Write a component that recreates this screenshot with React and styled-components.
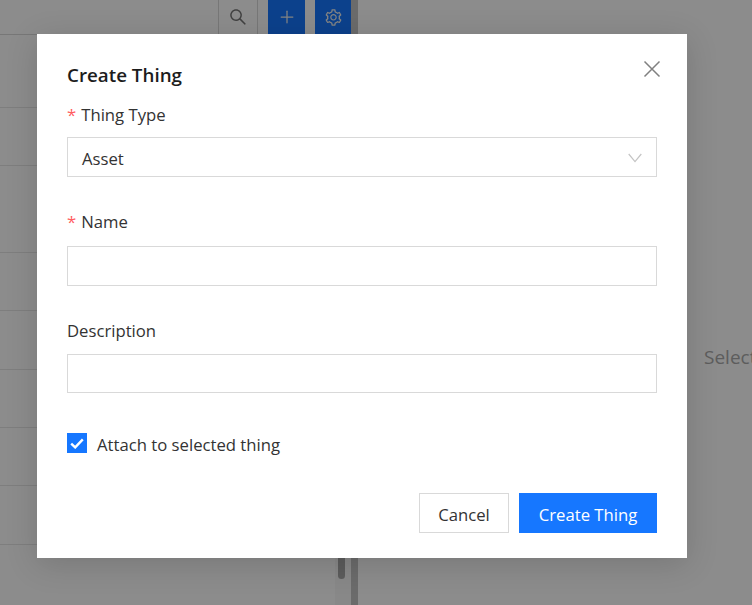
import React from "react";
import styled, { createGlobalStyle } from "styled-components";
import { Plus } from "lucide-react";
import { AiOutlineSearch, AiOutlineSetting } from "react-icons/ai";

const Global = createGlobalStyle`
  html, body { margin: 0; padding: 0; height: 100%; }
  body { font-family: "Open Sans", "Noto Sans", "Liberation Sans", sans-serif; background: #fff; overflow: hidden; }
  * { box-sizing: border-box; }
`;

const Page = styled.div`
  position: relative;
  width: 752px;
  height: 605px;
  display: flex;
  overflow: hidden;
  background: #fff;
`;

const LeftPane = styled.div`
  width: 351px;
  height: 100%;
  display: flex;
  flex-direction: column;
`;

const Toolbar = styled.div`
  height: 34px;
  display: flex;
  justify-content: flex-end;
  align-items: stretch;
  gap: 10px;
  flex: none;
`;

const IconCell = styled.div`
  width: 40px;
  display: flex;
  align-items: center;
  justify-content: center;
  color: #777;
  border-left: 1px solid #d9d9d9;
  border-right: 1px solid #d9d9d9;
`;

const ToolButton = styled.div`
  width: ${p => p.$w}px;
  display: flex;
  align-items: center;
  justify-content: center;
  background: #1677ff;
  color: #f0f0f0;
`;

const Body = styled.div`
  flex: 1;
  display: flex;
  border-top: 1px solid #d9d9d9;
  min-height: 0;
`;

const Tree = styled.div`
  flex: 1;
  display: flex;
  flex-direction: column;
`;

const TreeRow = styled.div`
  height: ${p => p.$h}px;
  flex: none;
  border-bottom: 1px solid #e6e6e6;
`;

const ScrollTrack = styled.div`
  position: relative;
  width: 16px;
  flex: none;
  background: #f7f7f7;
`;

const ScrollThumb = styled.div`
  position: absolute;
  left: 3px;
  bottom: 26px;
  width: 7px;
  height: 200px;
  border-radius: 0 0 4px 4px;
  background: #a8a8a8;
`;

const Splitter = styled.div`
  width: 7px;
  background: #c4c4c4;
  flex: none;
`;

const RightPane = styled.div`
  flex: 1;
  display: flex;
  align-items: center;
  color: #aaa;
  font-size: 19px;
  white-space: nowrap;
  padding: 108px 0 0 346px;
  overflow: hidden;
`;

const Overlay = styled.div`
  position: absolute;
  inset: 0;
  background: rgba(0, 0, 0, 0.45);
`;

const Dialog = styled.div`
  position: absolute;
  left: 37px;
  top: 34px;
  width: 650px;
  height: 524px;
  background: #fff;
  padding: 28px 30px 25px;
  display: flex;
  flex-direction: column;
  box-shadow: 0 6px 30px rgba(0, 0, 0, 0.15);
  color: #333;
`;

const Title = styled.h2`
  margin: 0;
  font-size: 18.8px;
  line-height: 26px;
  font-weight: 600;
  color: #1c1c1c;
`;

const Close = styled.svg`
  position: absolute;
  top: 26px;
  right: 26px;
  width: 18px;
  height: 18px;
  stroke: #808080;
  stroke-width: 1.5;
  fill: none;
`;

const Field = styled.div`
  display: flex;
  flex-direction: column;
  margin-top: ${p => p.$mt}px;
`;

const Label = styled.div`
  font-size: 16.7px;
  line-height: 24px;
  margin-bottom: ${p => p.$mb}px;
  color: #333;
`;

const Star = styled.span`
  color: #ff5c5f;
  margin-right: 5px;
`;

const Input = styled.div`
  height: ${p => p.$h || 40}px;
  border: 1px solid #d9d9d9;
  padding: 2px 14px 0;
  display: flex;
  align-items: center;
  justify-content: space-between;
  font-size: 16.7px;
  color: #333;
`;

const Chevron = styled.svg`
  width: 14px;
  height: 10px;
  stroke: #c4c4c4;
  stroke-width: 1.2;
  fill: none;
`;

const CheckRow = styled.div`
  display: flex;
  align-items: center;
  gap: 10px;
  margin-top: 40px;
  font-size: 16.7px;
  line-height: 24px;
`;

const Box = styled.span`
  width: 20px;
  height: 20px;
  margin-bottom: 4px;
  background: #1677ff;
  display: flex;
  align-items: center;
  justify-content: center;
`;

const CheckMark = styled.svg`
  width: 14px;
  height: 11px;
  stroke: #fff;
  stroke-width: 2.4;
  fill: none;
`;

const Footer = styled.div`
  margin-top: auto;
  display: flex;
  justify-content: flex-end;
  gap: 10px;
`;

const Button = styled.button`
  height: 40px;
  width: ${p => p.$w}px;
  border: 1px solid ${p => (p.$primary ? "#1677ff" : "#d9d9d9")};
  background: ${p => (p.$primary ? "#1677ff" : "#fff")};
  color: ${p => (p.$primary ? "#fff" : "#333")};
  font: inherit;
  font-size: 16.7px;
  padding: 2px 0 0;
`;

const rows = [73, 58, 87, 58, 59, 58, 58, 59];

export default function App() {
  return (
    <Page>
      <Global />
      <LeftPane>
        <Toolbar>
          <IconCell><AiOutlineSearch size={20} /></IconCell>
          <ToolButton $w={37}><Plus size={20} strokeWidth={1.5} /></ToolButton>
          <ToolButton $w={36}><AiOutlineSetting size={19} /></ToolButton>
        </Toolbar>
        <Body>
          <Tree>
            {rows.map((h, i) => <TreeRow key={i} $h={h} />)}
          </Tree>
          <ScrollTrack><ScrollThumb /></ScrollTrack>
        </Body>
      </LeftPane>
      <Splitter />
      <RightPane>Select</RightPane>
      <Overlay />
      <Dialog>
        <Title>Create Thing</Title>
        <Close viewBox="0 0 18 18"><path d="M1.5 1.5 16.5 16.5M16.5 1.5 1.5 16.5" /></Close>
        <Field $mt={15}>
          <Label $mb={10}><Star>*</Star>Thing Type</Label>
          <Input>Asset<Chevron viewBox="0 0 14 10"><path d="M.7 1 7 8.6 13.3 1" /></Chevron></Input>
        </Field>
        <Field $mt={33}>
          <Label $mb={12}><Star>*</Star>Name</Label>
          <Input />
        </Field>
        <Field $mt={33}>
          <Label $mb={11}>Description</Label>
          <Input $h={39} />
        </Field>
        <CheckRow>
          <Box><CheckMark viewBox="0 0 14 11"><path d="M1.2 5.6 5.2 9.4 12.8 1.4" /></CheckMark></Box>
          Attach to selected thing
        </CheckRow>
        <Footer>
          <Button $w={90}>Cancel</Button>
          <Button $w={138} $primary>Create Thing</Button>
        </Footer>
      </Dialog>
    </Page>
  );
}
